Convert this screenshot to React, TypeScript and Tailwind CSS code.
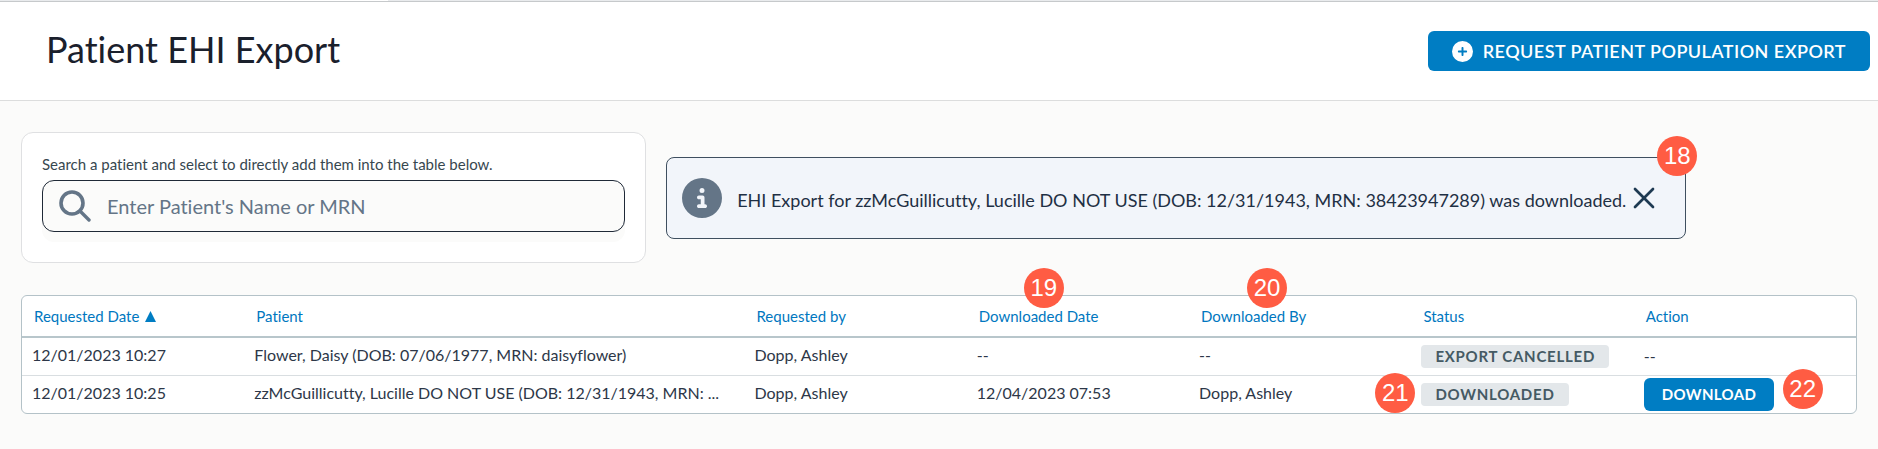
import React from 'react';
import { X } from 'lucide-react';
import { FaCircleInfo, FaCirclePlus } from 'react-icons/fa6';

interface ExportRow {
  id: number;
  requestedDate: string;
  patient: string;
  requestedBy: string;
  downloadedDate: string;
  downloadedBy: string;
  status: string;
  statusMarker?: string;
  canDownload: boolean;
}

const rows: ExportRow[] = [
  {
    id: 1,
    requestedDate: '12/01/2023 10:27',
    patient: 'Flower, Daisy (DOB: 07/06/1977, MRN: daisyflower)',
    requestedBy: 'Dopp, Ashley',
    downloadedDate: '--',
    downloadedBy: '--',
    status: 'EXPORT CANCELLED',
    canDownload: false
  },
  {
    id: 2,
    requestedDate: '12/01/2023 10:25',
    patient: 'zzMcGuillicutty, Lucille DO NOT USE (DOB: 12/31/1943, MRN: ...',
    requestedBy: 'Dopp, Ashley',
    downloadedDate: '12/04/2023 07:53',
    downloadedBy: 'Dopp, Ashley',
    status: 'DOWNLOADED',
    statusMarker: '21',
    canDownload: true
  }
];

// Numbered callout that floats over the element it explains
function Marker({ label, className }: { label: string; className: string }) {
  return (
    <span
      className={`absolute z-10 flex h-10 w-10 items-center justify-center rounded-full bg-[#ff5c43] font-['Liberation_Sans',sans-serif] text-2xl font-normal text-white ${className}`}
    >
      {label}
    </span>
  );
}

function SearchIcon() {
  return (
    <svg viewBox="0 0 32 32" className="h-8 w-8 shrink-0" fill="none" stroke="#647587" strokeWidth="3.6">
      <circle cx="13" cy="13" r="11" />
      <path d="M21 21 30 30" strokeLinecap="round" strokeWidth="3.4" />
    </svg>
  );
}

function PageHeader() {
  return (
    <header className="flex items-center justify-between border-b border-[#dcdddd] bg-white py-[29px] pl-[46px] pr-2">
      <h1 className="pb-1 text-4xl leading-9 text-[#1a202c]">Patient EHI Export</h1>
      <button className="flex h-10 items-center gap-2.5 rounded-md bg-[#007dc3] px-6 text-lg font-semibold tracking-wide text-white">
        <FaCirclePlus size={21} />
        REQUEST PATIENT POPULATION EXPORT
      </button>
    </header>
  );
}

function PatientSearch() {
  return (
    <section className="w-[34.2%] shrink-0 rounded-xl border border-[#dfe0e2] bg-white px-5 pb-[30px] pt-5">
      <label htmlFor="patient-search" className="block text-[15px] leading-[23px] text-[#37474f]">
        Search a patient and select to directly add them into the table below.
      </label>
      <div className="mt-1 flex items-center gap-4 rounded-xl border border-[#1f2937] bg-[#fbfbfa] px-4 shadow-[0_10px_0_0_#fbfbfa]">
        <SearchIcon />
        <input
          id="patient-search"
          type="text"
          placeholder="Enter Patient's Name or MRN"
          className="h-[50px] min-w-0 flex-1 bg-transparent text-xl text-[#1f2937] outline-none placeholder:text-[#647587]"
        />
      </div>
    </section>
  );
}

function DownloadedAlert() {
  return (
    <div role="alert" className="relative flex h-[82px] items-center rounded-lg border border-[#3f4f5f] bg-[#f2f5fa] px-[15px]">
      <FaCircleInfo size={40} className="shrink-0 text-[#647587]" />
      <p className="ml-[15px] pt-1 text-lg text-[#1f3044]">
        EHI Export for zzMcGuillicutty, Lucille DO NOT USE (DOB: 12/31/1943, MRN: 38423947289) was downloaded.
      </p>
      <button aria-label="Dismiss" className="mr-2 text-[#1e3a52]">
        <X size={36} strokeWidth={1.8} />
      </button>
      <Marker label="18" className="-right-3 -top-[22px]" />
    </div>
  );
}

function ExportTable() {
  return (
    <div className="rounded-md border border-[#b4c2c8] bg-white">
      <table className="w-full table-fixed border-collapse text-left">
        <colgroup>
          <col />
          <col className="w-[27.27%]" />
          <col />
          <col />
          <col />
          <col />
          <col />
        </colgroup>
        <thead>
          <tr className="h-[41px] border-b-2 border-[#b8c6cb] text-[15px] text-[#0077c0]">
            <th className="px-3 font-normal">
              <button className="flex items-center gap-1.5">
                Requested Date
                <svg viewBox="0 0 10 10" className="h-[11px] w-[11px] fill-[#007dc3]">
                  <path d="M5 0 10 10H0z" />
                </svg>
              </button>
            </th>
            <th className="px-3 font-normal">Patient</th>
            <th className="px-3 font-normal">Requested by</th>
            <th className="relative px-3 font-normal">
              Downloaded Date
              <Marker label="19" className="-top-7 left-[57px]" />
            </th>
            <th className="relative px-3 font-normal">
              Downloaded By
              <Marker label="20" className="-top-7 left-[58px]" />
            </th>
            <th className="px-3 font-normal">Status</th>
            <th className="px-3 font-normal">Action</th>
          </tr>
        </thead>
        <tbody className="text-base text-[#2d3748]">
          {rows.map(row => (
            <tr key={row.id} className="h-[38px] border-b border-[#d9dee1] last:border-b-0">
              <td className="px-2.5 pb-0.5">{row.requestedDate}</td>
              <td className="whitespace-nowrap px-2.5 pb-0.5">{row.patient}</td>
              <td className="px-2.5 pb-0.5">{row.requestedBy}</td>
              <td className="px-2.5 pb-0.5">{row.downloadedDate}</td>
              <td className="px-2.5 pb-0.5">{row.downloadedBy}</td>
              <td className="relative px-2.5 pb-0.5">
                {row.statusMarker && <Marker label={row.statusMarker} className="-left-9 -top-[3px]" />}
                <span className="inline-block whitespace-nowrap rounded bg-[#e3e7ea] px-3.5 align-middle text-[15px] font-bold leading-[23px] tracking-wider text-[#455a64]">
                  {row.status}
                </span>
              </td>
              <td className="relative px-2.5">
                {row.canDownload ? (
                  <>
                    <button className="block h-[33px] rounded-md bg-[#007dc3] px-[18px] text-[15px] font-bold tracking-wide text-white">
                      DOWNLOAD
                    </button>
                    <Marker label="22" className="-top-[7px] left-[149px]" />
                  </>
                ) : (
                  '--'
                )}
              </td>
            </tr>
          ))}
        </tbody>
      </table>
    </div>
  );
}

export default function App() {
  return (
    <div className="min-h-screen bg-[#fbfbfa] font-[Lato,'Open_Sans',sans-serif] [font-variant-ligatures:none]">
      <div className="flex h-0.5 border-b border-[#c6c9cb] bg-[#e9ebed]">
        <div className="ml-[220px] w-[168px] bg-white" />
      </div>
      <PageHeader />
      <main className="px-[21px] pt-[31px]">
        <div className="flex items-center gap-5 pr-2">
          <PatientSearch />
          <DownloadedAlert />
        </div>
        <div className="mt-8">
          <ExportTable />
        </div>
      </main>
    </div>
  );
}
